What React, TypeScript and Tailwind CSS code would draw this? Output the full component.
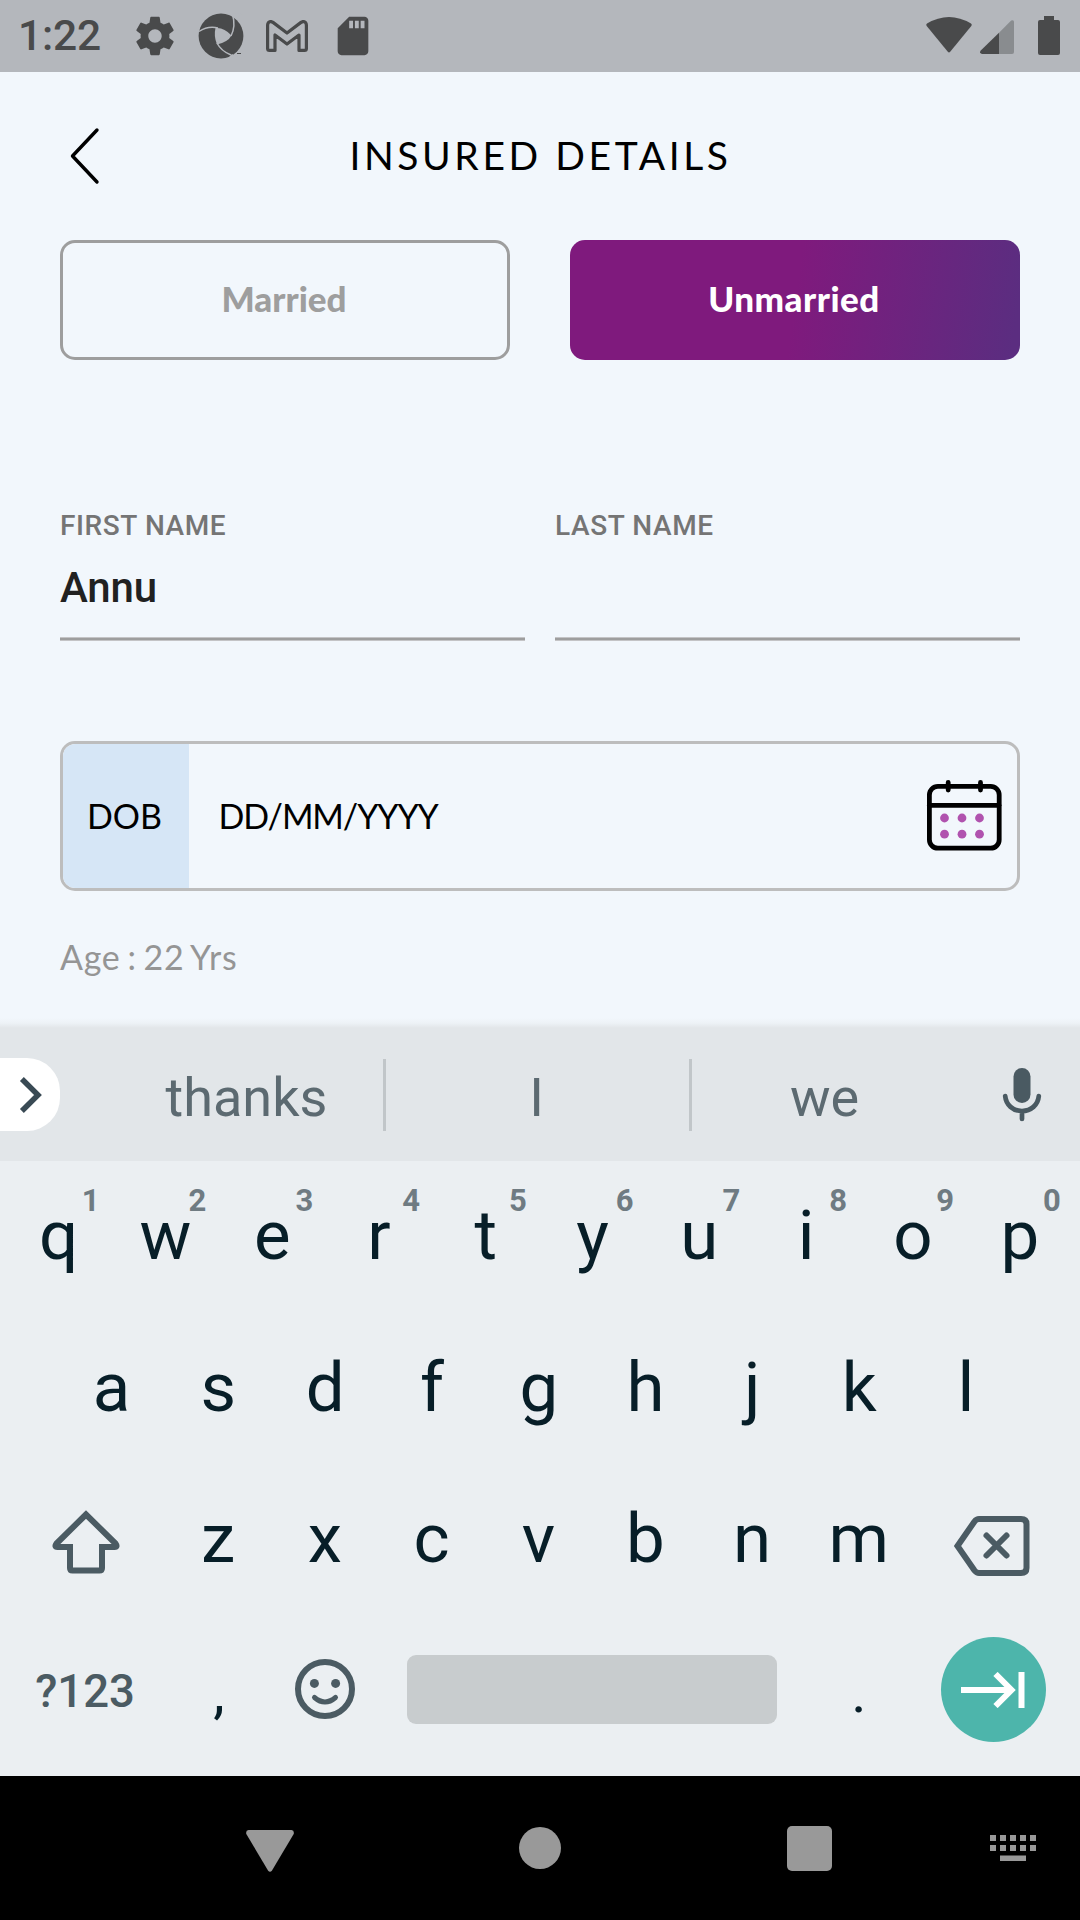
import React from "react";

type KeyDef = { label: string; hint?: string };

const TOP_ROW: KeyDef[] = [
  { label: "q", hint: "1" },
  { label: "w", hint: "2" },
  { label: "e", hint: "3" },
  { label: "r", hint: "4" },
  { label: "t", hint: "5" },
  { label: "y", hint: "6" },
  { label: "u", hint: "7" },
  { label: "i", hint: "8" },
  { label: "o", hint: "9" },
  { label: "p", hint: "0" },
];
const HOME_ROW: KeyDef[] = "asdfghjkl".split("").map((label) => ({ label }));
const LOWER_ROW: KeyDef[] = "zxcvbnm".split("").map((label) => ({ label }));

function Key({ label, hint }: KeyDef) {
  return (
    <button className="relative flex h-[152px] w-[106.8px] justify-center text-[69px] leading-[150px] text-[#071e28]">
      {label}
      {hint && (
        <span className="absolute top-[22px] left-[59.500px] w-[52px] text-center text-[31px] leading-[36px] font-bold text-[#6f7b82]">
          {hint}
        </span>
      )}
    </button>
  );
}

function StatusBar() {
  return (
    <header className="flex h-[72px] items-center bg-[#b4b7bc] text-[#494a4b]">
      <span className="ml-[18px] w-[114px] text-[42.5px] leading-[76px] font-medium tracking-[-0.2px]">1:22</span>
      <svg className="h-[46px] w-[46px]" viewBox="0 0 24 24" fill="currentColor">
        <path d="M19.43 12.98c.04-.32.07-.64.07-.98s-.03-.66-.07-.98l2.11-1.65c.19-.15.24-.42.12-.64l-2-3.46c-.12-.22-.39-.3-.61-.22l-2.49 1c-.52-.4-1.08-.73-1.69-.98l-.38-2.65C14.46 2.18 14.25 2 14 2h-4c-.25 0-.46.18-.49.42l-.38 2.65c-.61.25-1.17.59-1.69.98l-2.49-1c-.23-.09-.49 0-.61.22l-2 3.46c-.13.22-.07.49.12.64l2.11 1.65c-.04.32-.07.65-.07.98s.03.66.07.98l-2.11 1.65c-.19.15-.24.42-.12.64l2 3.46c.12.22.39.3.61.22l2.49-1c.52.4 1.08.73 1.69.98l.38 2.65c.03.24.24.42.49.42h4c.25 0 .46-.18.49-.42l.38-2.65c.61-.25 1.17-.59 1.69-.98l2.49 1c.23.09.49 0 .61-.22l2-3.46c.12-.22.07-.49-.12-.64l-2.11-1.65zM12 15.5c-1.93 0-3.5-1.57-3.5-3.5s1.57-3.5 3.5-3.5 3.5 1.57 3.5 3.5-1.57 3.5-3.5 3.5z" />
      </svg>
      <svg className="ml-5 h-[46px] w-[46px]" viewBox="0 0 46 46" fill="none">
        <circle cx="23" cy="23" r="22.4" fill="currentColor" />
        <path d="M17.5 15Q26 14 33.5 22.5 30 29 19 31.500 15.500 23 17.500 15Z" fill="#b4b7bc" />
        <path d="M1 18.500Q10 12.500 20 15M34.500 1.500Q38 13 33 23M19 30Q23 38 33 42" stroke="#b4b7bc" strokeWidth="1.5" />
        <path d="M34.500 1 37.500 5.500 46 0ZM29 46 34 41 44 46Z" fill="#b4b7bc" />
        <path d="M39 40.500h4" stroke="currentColor" strokeWidth="1" />
      </svg>
      <svg className="ml-[21.5px] h-8 w-[42px]" viewBox="0 0 42 32" fill="none" stroke="currentColor" strokeWidth="3.2" strokeLinejoin="round">
        <path d="M1.600 5.500C1.600 1.800 4.500.600 7 2.400L21 13 35 2.400C37.500.600 40.400 1.800 40.400 5.500V28.500Q40.400 30.400 38.500 30.400H33V15L21 24 9 15V30.400H3.500Q1.600 30.400 1.600 28.500Z" />
      </svg>
      <svg className="ml-[22.5px] h-[46px] w-[46px]" viewBox="0 0 24 24" fill="currentColor">
        <path d="M18 2h-8L4.020 8 4 20c0 1.100.900 2 2 2h12c1.100 0 2-.900 2-2V4c0-1.100-.900-2-2-2zm-6 6h-2V4h2v4zm3 0h-2V4h2v4zm3 0h-2V4h2v4z" />
      </svg>
      <div className="mr-5 ml-auto flex">
        <svg className="h-10 w-[46px]" viewBox="0 0 46 40" fill="currentColor">
          <path d="M1 7.500Q23-5.500 45 7.500 46.300 8.600 45.300 10L24.200 35.800Q23 37.200 21.800 35.800L.700 10Q-.300 8.600 1 7.500Z" />
        </svg>
        <svg className="ml-2 h-10 w-[34px]" viewBox="0 0 34 40" fill="currentColor">
          <path d="M31.200 4.600Q34 3.200 34 6V36Q34 38 32 38H19V16.800Z" fill="#898c8f" />
          <path d="M19 16.800V38H2Q-.800 37.500.500 34.800Z" />
        </svg>
        <svg className="ml-6 h-10 w-[22px]" viewBox="0 0 22 40" fill="currentColor">
          <path d="M6 0H16V4H20Q22 4 22 6V37Q22 39 20 39H2Q0 39 0 37V6Q0 4 2 4H6Z" />
        </svg>
      </div>
    </header>
  );
}

function CalendarIcon() {
  return (
    <svg className="h-[74px] w-[76px]" viewBox="0 0 76 74" fill="none" stroke="#000" strokeWidth="4.8" strokeLinecap="round">
      <rect x="3.4" y="7.4" width="69.8" height="61.8" rx="8.5" />
      <path d="M3.400 26.300H73" />
      <path d="M22.200 3.400V11M54.500 3.400V11" />
      <g fill="#b052ae" stroke="none">
        <circle cx="18.5" cy="39" r="4.4" />
        <circle cx="36" cy="39" r="4.4" />
        <circle cx="53.5" cy="39" r="4.4" />
        <circle cx="18.5" cy="55.2" r="4.4" />
        <circle cx="36" cy="55.2" r="4.4" />
        <circle cx="53.5" cy="55.2" r="4.4" />
      </g>
    </svg>
  );
}

function Field({ label, value }: { label: string; value: string }) {
  return (
    <label className="flex h-[133px] flex-1 flex-col">
      <span className="h-9 text-[28px] leading-9 font-medium tracking-[0.6px] text-[#757575]">{label}</span>
      <span className="mt-[19px] h-[50px] text-[42px] leading-[50px] font-medium tracking-[-0.2px] text-[#212121]">{value}</span>
      <span className="mt-auto h-1 border-y border-[#c4c4c6] bg-[#9e9e9e]" />
    </label>
  );
}

function InsuredForm() {
  return (
    <main className="flex h-[946px] flex-col bg-[#f2f7fc] px-[60px] font-[Lato,sans-serif]">
      <div className="mt-12 flex h-[72px] items-center">
        <svg className="ml-[10px] h-[60px] w-[30px]" viewBox="0 0 30 60" fill="none" stroke="#000" strokeWidth="3.4" strokeLinecap="round" strokeLinejoin="round">
          <path d="M27 4 2.500 30 27 56" />
        </svg>
        <h1 className="mr-[39px] mb-0.5 flex-1 text-center text-[39px] leading-[68px] tracking-[3.6px] text-black">INSURED DETAILS</h1>
      </div>
      <div className="mt-12 grid grid-cols-2 gap-[60px]">
        <button className="h-[120px] rounded-[15px] border-3 border-[#9e9e9e] pr-0.5 pb-[3px] text-[35px] font-black text-[#9e9e9e]">Married</button>
        <button className="h-[120px] rounded-[15px] bg-[linear-gradient(98deg,#7f1a7d_50%,#5b2d80_98%)] pr-0.5 pb-[3px] text-[35px] font-black tracking-[0.5px] text-white">Unmarried</button>
      </div>
      <div className="mt-[148px] flex gap-[30px] font-[Roboto,sans-serif]">
        <Field label="FIRST NAME" value="Annu" />
        <Field label="LAST NAME" value="" />
      </div>
      <div className="mt-[100px] flex h-[150px] items-center overflow-hidden rounded-[15px] border-3 border-[#bdbdbd] text-[34px] text-black">
        <span className="h-full w-[126px] rounded-l-[12px] bg-[#d6e6f6] pr-[3px] text-center leading-[143px]">DOB</span>
        <span className="ml-[29.5px] pb-0.5 tracking-[-1.1px]">DD/MM/YYYY</span>
        <span className="mr-[15px] ml-auto">
          <CalendarIcon />
        </span>
      </div>
      <p className="mt-[44px] text-[34px] leading-[44px] tracking-[0.7px] [word-spacing:-2.5px] text-[#959595]">Age : 22 Yrs</p>
    </main>
  );
}

function SuggestionStrip() {
  return (
    <div className="flex h-[143px] items-center bg-[linear-gradient(to_bottom,#f2f7fc,#edf2f6_5px,#e2e6e9_10px)] pt-2 text-[54px] text-[#5c6a71]">
      <button className="mt-0.5 flex h-[73px] w-[60px] items-center justify-end rounded-r-[33px] bg-white pr-[17px]">
        <svg className="h-[38px] w-[24px]" viewBox="0 0 24 38" fill="none" stroke="#394a54" strokeWidth="5.5">
          <path d="M2.900 3 19 19 2.900 35" />
        </svg>
      </button>
      <span className="mt-2 ml-[50px] w-[273px] text-center">thanks</span>
      <span className="mt-0.5 h-[72px] w-[3px] bg-[#c1c6c9]" />
      <span className="mt-2 w-[303px] pr-0.5 text-center">I</span>
      <span className="mt-0.5 h-[72px] w-[3px] bg-[#c1c6c9]" />
      <span className="mt-2 w-[267px] pr-0.5 text-center">we</span>
      <svg className="mt-0.5 mr-[38.5px] ml-auto h-[54px] w-[40px]" viewBox="0 0 40 54" fill="none" stroke="#4a5a62" strokeLinecap="round">
        <path d="M20 8.500V26.500" strokeWidth="17" />
        <path d="M3.200 28C4 37 11 43 20 43S36 37 36.800 28M20 44V51" strokeWidth="4.7" />
      </svg>
    </div>
  );
}

function Keyboard() {
  return (
    <section className="h-[615px] overflow-hidden bg-[#ebeff2]">
      <div className="flex h-[152px] px-[5.2px]">
        {TOP_ROW.map((k) => (
          <Key key={k.label} {...k} />
        ))}
      </div>
      <div className="flex h-[151px] px-[58.2px]">
        {HOME_ROW.map((k) => (
          <Key key={k.label} {...k} />
        ))}
      </div>
      <div className="flex h-[152px]">
        <div className="flex w-[164.7px] items-center">
          <svg className="mt-[6px] ml-[51px] h-[68px] w-[70px]" viewBox="0 0 70 68" fill="none" stroke="#4b5b63" strokeWidth="6">
            <path d="M35 5.500 5.500 34.500Q3 38 6.500 38H19V59Q19 61.500 21.500 61.500H48.500Q51 61.500 51 59V38H63.500Q67 38 64.500 34.500Z" />
          </svg>
        </div>
        {LOWER_ROW.map((k) => (
          <Key key={k.label} {...k} />
        ))}
        <div className="flex flex-1 items-center">
          <svg className="mt-[11px] ml-[41px] h-[62px] w-[78px]" viewBox="0 0 78 62" fill="none" stroke="#4b5b63" strokeWidth="6">
            <path d="M4.500 31 21.500 6.500Q23.500 4 26 4H68Q73.500 4 73.500 9V53Q73.500 58 68 58H26Q23.500 58 21.500 55.500Z" />
            <path d="M33.500 20.500 53.500 40.500M53.500 20.500 33.500 40.500" strokeLinecap="round" />
          </svg>
        </div>
      </div>
      <div className="flex h-[160px] items-start">
        <span className="w-[170px] text-center text-[45.5px] leading-[151px] font-medium text-[#4b5b63]">?123</span>
        <span className="w-[98px] text-center text-[58px] leading-[152px] text-[#071e28]">,</span>
        <svg className="mt-[42px] ml-[26px] h-[62px] w-[62px]" viewBox="0 0 62 62" fill="none" stroke="#4b5b63">
          <circle cx="31" cy="31" r="27" strokeWidth="6" />
          <g fill="#4b5b63" stroke="none">
            <circle cx="20.4" cy="25.4" r="4.5" />
            <circle cx="41.6" cy="25.4" r="4.5" />
          </g>
          <path d="M20.500 39.500Q31 48.500 41.500 39.500" strokeWidth="5" strokeLinecap="round" />
        </svg>
        <span className="mt-[39px] ml-[51px] h-[69px] w-[370px] rounded-[9px] bg-[#c8ccce]" />
        <span className="ml-[32px] w-[100px] text-center text-[58px] leading-[152px] text-[#071e28]">.</span>
        <button className="mt-[21px] ml-[31.5px] flex h-[105px] w-[105px] items-center justify-center rounded-full bg-[#4db5ab]">
          <svg className="h-9 w-16" viewBox="0 0 64 36" fill="none" stroke="#fff" strokeWidth="6">
            <path d="M0 18H50M34.500 2 50.500 18 34.500 34M60.500 0V36" />
          </svg>
        </button>
      </div>
    </section>
  );
}

function NavBar() {
  return (
    <nav className="flex h-36 items-center bg-black text-[#999]">
      <svg className="mt-[6px] ml-[246px] h-[42px] w-12" viewBox="0 0 48 42" fill="currentColor">
        <path d="M2.500 0H45.500Q48.500.500 47.700 4L26 40.500Q24 43 22 40.500L.300 4Q-.500.500 2.500 0Z" />
      </svg>
      <span className="ml-[225px] h-[42px] w-[42px] rounded-full bg-current" />
      <span className="ml-[226px] h-[45px] w-[45px] rounded-[5px] bg-current" />
      <svg className="ml-[158px] h-[26px] w-[46px]" viewBox="0 0 46 26" fill="currentColor">
        <path d="M0 0h6v6H0zM10 0h6v6h-6zM20 0h6v6h-6zM30 0h6v6h-6zM40 0h6v6h-6zM0 10h6v6H0zM10 10h6v6h-6zM20 10h6v6h-6zM30 10h6v6h-6zM40 10h6v6h-6zM10 20.500h26V26H10z" />
      </svg>
    </nav>
  );
}

export default function App() {
  return (
    <div className="h-[1920px] w-[1080px] overflow-hidden bg-[#f2f7fc] font-[Roboto,sans-serif]">
      <StatusBar />
      <InsuredForm />
      <SuggestionStrip />
      <Keyboard />
      <NavBar />
    </div>
  );
}
